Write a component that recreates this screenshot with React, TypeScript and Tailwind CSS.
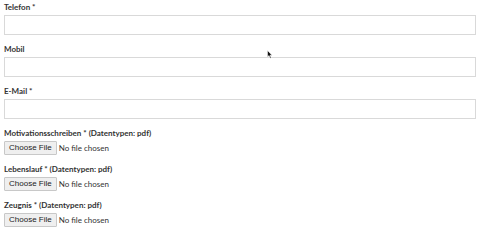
import React from "react";

function Label({ children }: { children: React.ReactNode }) {
  return (
    <div className="h-[12px] leading-[12px] text-[8px] font-bold text-[#333333] whitespace-nowrap">
      {children}
    </div>
  );
}

function TextField({ label }: { label: string }) {
  return (
    <div className="flex flex-col gap-[2px] mb-[8px]">
      <Label>{label}</Label>
      <div className="h-[20px] border border-[#d9d9d9] bg-white" />
    </div>
  );
}

function FileField({ label, last }: { label: string; last?: boolean }) {
  return (
    <div className={"flex flex-col gap-[2px] " + (last ? "" : "mb-[8px]")}>
      <Label>{label}</Label>
      <div className="flex items-center gap-[2px] h-[14px]">
        <div
          className="h-[14px] px-[4px] flex items-center border border-[#c8c8c8] rounded-[1px] bg-[#efefef] text-[8px] text-[#222] leading-none"
          style={{ fontFamily: '"Liberation Sans", Arial, sans-serif' }}
        >
          Choose File
        </div>
        <span className="text-[8px] text-[#333] leading-none">No file chosen</span>
      </div>
    </div>
  );
}

export default function App() {
  return (
    <div
      className="relative w-[480px] h-[229px] bg-white overflow-hidden px-[4px] pt-[1px]"
      style={{ fontFamily: 'Lato, "Open Sans", sans-serif' }}
    >
      <TextField label="Telefon *" />
      <TextField label="Mobil" />
      <TextField label="E-Mail *" />
      <FileField label="Motivationsschreiben * (Datentypen: pdf)" />
      <FileField label="Lebenslauf * (Datentypen: pdf)" />
      <FileField label="Zeugnis * (Datentypen: pdf)" last />
      <svg
        className="absolute left-[267px] top-[50px]"
        width="6"
        height="9"
        viewBox="0 0 6 9"
      >
        <path d="M0.5 0.5 L0.5 7 L2 5.6 L3.2 8.3 L4.2 7.8 L3 5.2 L5 5.2 Z" fill="#111" stroke="#fff" strokeWidth="0.5" />
      </svg>
    </div>
  );
}
